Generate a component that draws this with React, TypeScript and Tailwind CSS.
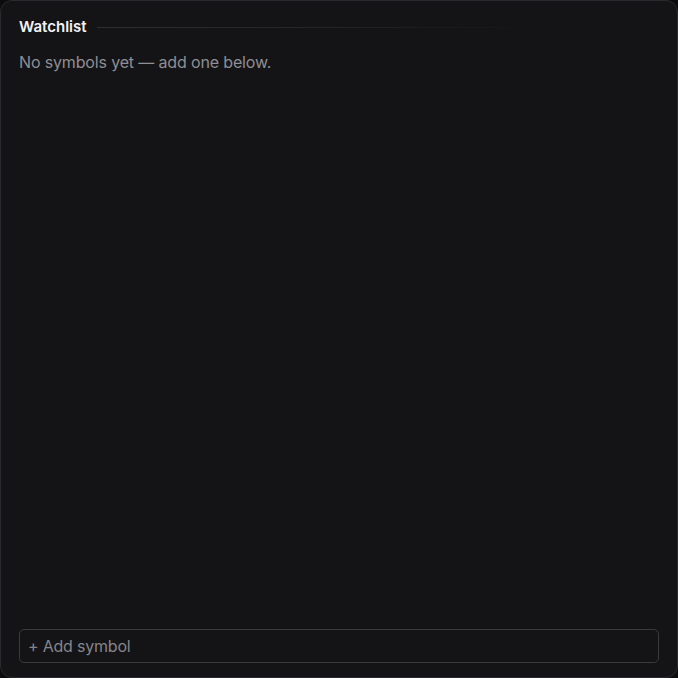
import React from "react";

export default function App() {
  return (
    <div className="w-[678px] h-[678px] bg-[#0c0c0e]" style={{ fontFamily: "Inter, 'Noto Sans', sans-serif" }}>
      <div className="w-full h-full rounded-[12px] border border-[#2a2a2e] bg-[#141416] flex flex-col px-[18px] pt-[16px] pb-[14px]">
        <div className="flex items-center gap-[10px] h-[20px]">
          <span className="text-[15px] font-semibold text-[#f2f2f4] tracking-[0px]">Watchlist</span>
          <div className="h-px w-[440px] bg-gradient-to-r from-[#2e2e32] via-[#252528] to-transparent" />
        </div>
        <p className="mt-[14px] text-[16px] text-[#8e8e94] tracking-[-0.15px] leading-[22px]">
          No symbols yet — add one below.
        </p>
        <div className="flex-1" />
        <div className="h-[34px] rounded-[5px] border border-[#3a3a3f] flex items-center px-[8px]">
          <span className="text-[16px] text-[#85858b] tracking-[-0.2px]">+ Add symbol</span>
        </div>
      </div>
    </div>
  );
}
